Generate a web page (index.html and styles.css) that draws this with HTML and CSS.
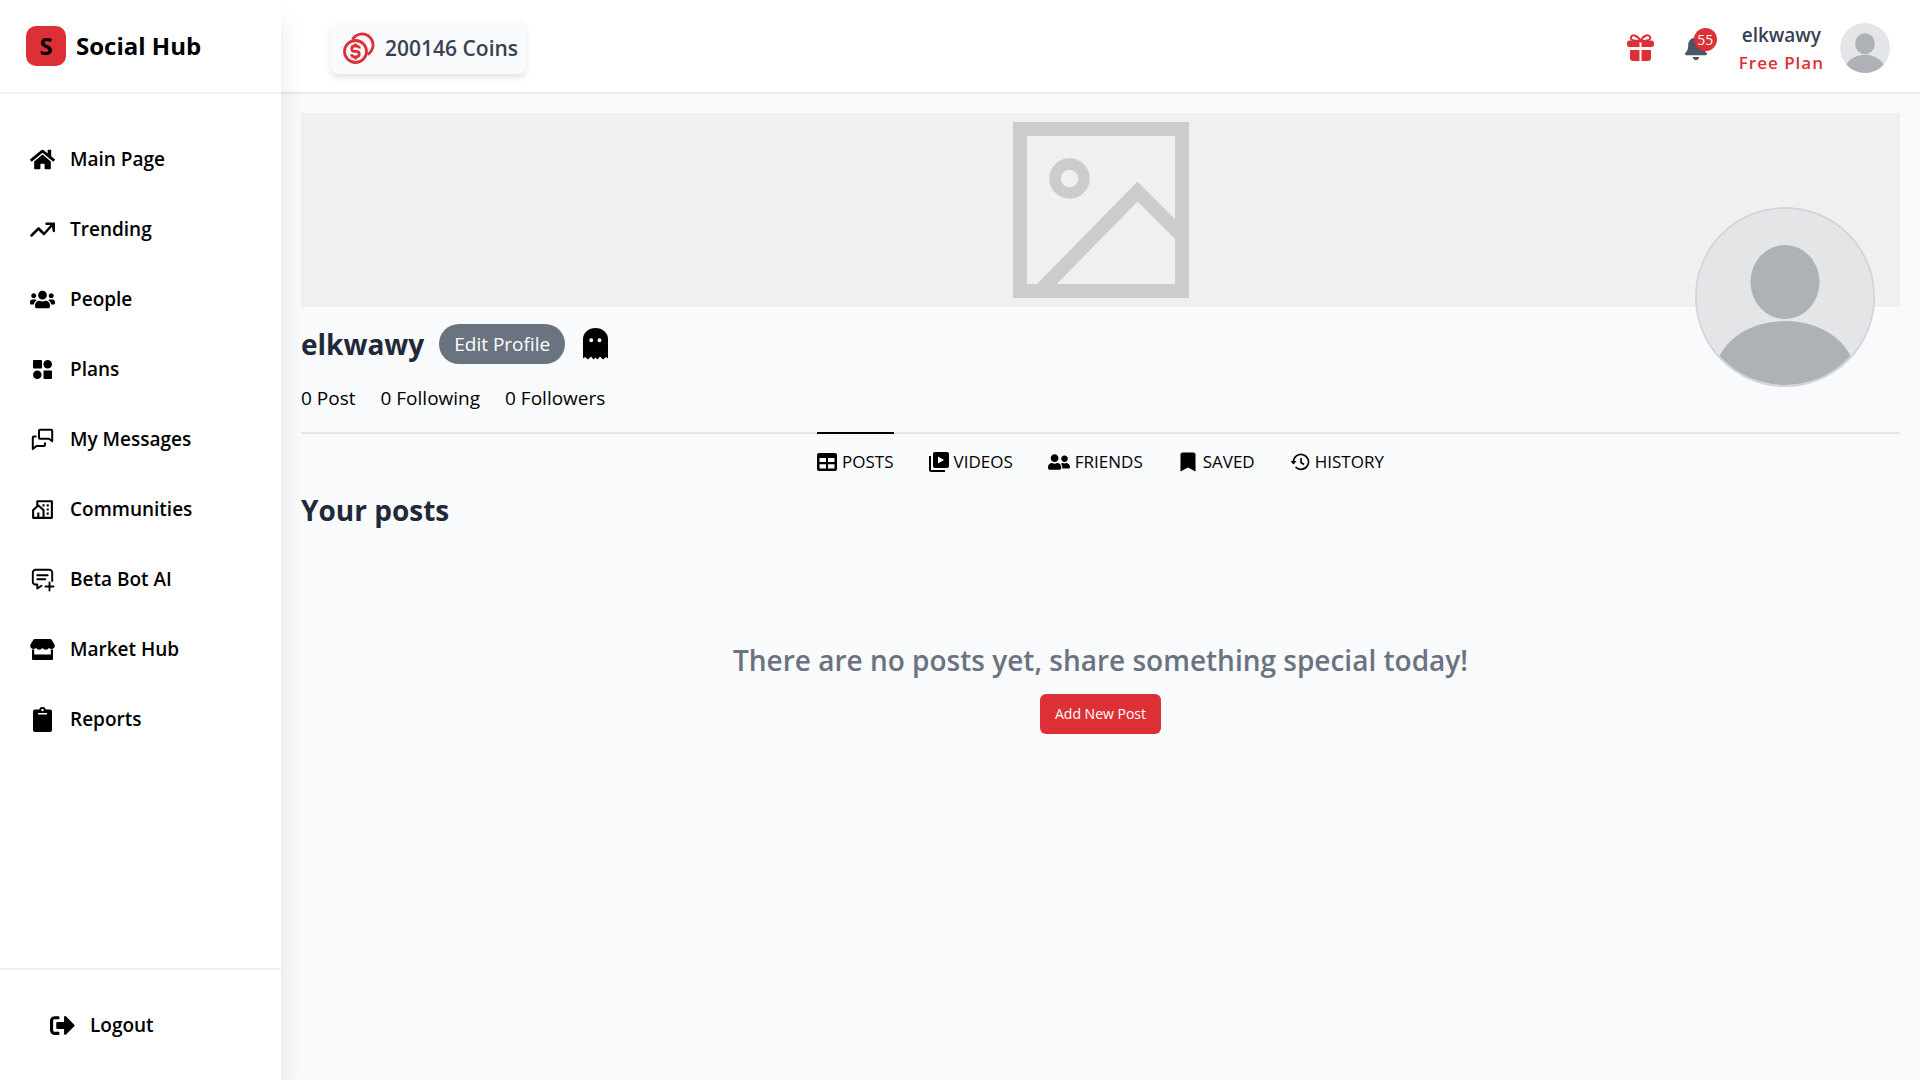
FILE: index.html
```html
<!DOCTYPE html>
<html lang="en">
<head>
<meta charset="utf-8">
<meta name="viewport" content="width=device-width, initial-scale=1">
<title>Social Hub</title>
<link rel="stylesheet" href="styles.css">
</head>
<body>
<div class="app">
  <aside class="sidebar">
    <a class="brand" href="#"><span class="brand-mark">S</span><span>Social Hub</span></a>
    <nav class="nav">
      <a href="#"><svg class="icon" viewBox="0 0 576 512"><path d="M280.37 148.26L96 300.11V464a16 16 0 0 0 16 16l112.06-.29a16 16 0 0 0 15.92-16V368a16 16 0 0 1 16-16h64a16 16 0 0 1 16 16v95.64a16 16 0 0 0 16 16.05L464 480a16 16 0 0 0 16-16V300L295.67 148.26a12.19 12.19 0 0 0-15.3 0zM571.6 251.47L488 182.56V44.05a12 12 0 0 0-12-12h-56a12 12 0 0 0-12 12v72.61L318.47 43a48 48 0 0 0-61 0L4.34 251.47a12 12 0 0 0-1.6 16.9l25.5 31A12 12 0 0 0 45.15 301l235.22-193.74a12.19 12.19 0 0 1 15.3 0L530.9 301a12 12 0 0 0 16.9-1.6l25.5-31a12 12 0 0 0-1.7-16.93z"/></svg><span>Main Page</span></a>
      <a href="#"><svg class="icon" viewBox="0 0 25 25"><path d="M1.5 18.5 8.5 11.500 14 17 22.500 7.500" fill="none" stroke="currentColor" stroke-width="2.500" stroke-linecap="round" stroke-linejoin="round"/><path d="M16.500 5.500H24a1 1 0 0 1 1 1V14a1.200 1.200 0 0 1-2.300.5L22 9.500 20 8l-3.500-.1a1.200 1.200 0 0 1 0-2.400z"/></svg><span>Trending</span></a>
      <a href="#"><svg class="icon" viewBox="0 0 640 512"><path d="M96 224c35.3 0 64-28.7 64-64s-28.7-64-64-64-64 28.7-64 64 28.7 64 64 64zm448 0c35.3 0 64-28.7 64-64s-28.7-64-64-64-64 28.7-64 64 28.7 64 64 64zm32 32h-64c-17.6 0-33.5 7.1-45.1 18.6 40.3 22.1 68.9 62 75.1 109.400h66c17.7 0 32-14.3 32-32v-32c0-35.3-28.7-64-64-64zm-256 0c61.9 0 112-50.1 112-112S381.900 32 320 32 208 82.1 208 144s50.1 112 112 112zm76.8 32h-8.300c-20.8 10-43.900 16-68.500 16s-47.600-6-68.500-16h-8.300C179.600 288 128 339.600 128 403.200V432c0 26.500 21.500 48 48 48h288c26.500 0 48-21.500 48-48v-28.800c0-63.600-51.600-115.200-115.200-115.200zm-223.700-13.400C161.500 263.100 145.600 256 128 256H64c-35.3 0-64 28.7-64 64v32c0 17.7 14.3 32 32 32h65.900c6.300-47.400 34.900-87.300 75.200-109.400z"/></svg><span>People</span></a>
      <a href="#"><svg class="icon" viewBox="0 0 25 25"><rect x="3" y="3" width="9" height="8.500" rx="1"/><circle cx="17.700" cy="7.200" r="4.300"/><circle cx="7.300" cy="17.700" r="4.300"/><rect x="13.500" y="13.500" width="8.500" height="8.500" rx="1"/></svg><span>Plans</span></a>
      <a href="#"><svg class="icon" viewBox="0 0 25 25"><path d="M10 2.800H21.200a1 1 0 0 1 1 1V14.200L19 11.800H10a1 1 0 0 1-1-1v-7a1 1 0 0 1 1-1zM6.500 9.500H3.800a1 1 0 0 0-1 1V22L6.500 19H14a1 1 0 0 0 1-1V15.500" fill="none" stroke="currentColor" stroke-width="2" stroke-linejoin="round"/></svg><span>My Messages</span></a>
      <a href="#"><svg class="icon" viewBox="0 0 24 24"><path d="M21 21H3a1 1 0 0 1-1-1v-7.513a1 1 0 0 1 .343-.754L6 8.544V4a1 1 0 0 1 1-1h14a1 1 0 0 1 1 1v16a1 1 0 0 1-1 1zM9 19h3v-6.058L8 9.454l-4 3.488V19h3v-4h2v4zm5 0h6V5H8v2.127c.234 0 .469.082.657.247l5 4.359a1 1 0 0 1 .343.754V19zm2-8h2v2h-2v-2zm0 4h2v2h-2v-2zm0-8h2v2h-2V7zm-4 0h2v2h-2V7z"/></svg><span>Communities</span></a>
      <a href="#"><svg class="icon" viewBox="0 0 25 25"><path d="M22.200 14V5.500a2.700 2.700 0 0 0-2.700-2.700h-14a2.700 2.700 0 0 0-2.700 2.700v9.300a2.700 2.700 0 0 0 2.700 2.700H7.300V21.500L11.500 18.800M7.300 8.300h10.400M7.300 12.300h8M19.500 15.500v8M15.500 19.500h8" fill="none" stroke="currentColor" stroke-width="1.900" stroke-linecap="round" stroke-linejoin="round"/></svg><span>Beta Bot AI</span></a>
      <a href="#"><svg class="icon" viewBox="0 0 25 25"><path d="M5 2H20a2 2 0 0 1 1.800 1L24.500 7.500a3.200 3.200 0 0 1-2.700 4.500A4 4 0 0 1 19 11a4 4 0 0 1-6.500 0A4 4 0 0 1 6 11 4 4 0 0 1 3.200 12 3.200 3.200 0 0 1 .5 7.500L3.200 3A2 2 0 0 1 5 2z"/><path d="M2 12.500H4.200V17.500H20.800V12.500H23V22a1 1 0 0 1-1 1H3a1 1 0 0 1-1-1z"/></svg><span>Market Hub</span></a>
      <a href="#"><svg class="icon" viewBox="0 0 25 25"><path fill-rule="evenodd" d="M5 2.500H9.200a3.400 3.400 0 0 1 6.600 0H20a2 2 0 0 1 2 2V23a2 2 0 0 1-2 2H5a2 2 0 0 1-2-2V4.500a2 2 0 0 1 2-2zM12.500 1.800a1.200 1.200 0 1 0 0 2.400 1.200 1.200 0 0 0 0-2.400zM8 6v1.500h9V6z"/></svg><span>Reports</span></a>
    </nav>
    <div class="sidebar-foot">
      <button class="logout" type="button"><svg class="icon" viewBox="0 0 512 512"><path d="M497 273L329 441c-15 15-41 4.500-41-17v-96H152c-13.300 0-24-10.700-24-24v-96c0-13.300 10.700-24 24-24h136V88c0-21.400 25.900-32 41-17l168 168c9.300 9.400 9.300 24.600 0 34zM192 436v-40c0-6.600-5.400-12-12-12H96c-17.700 0-32-14.300-32-32V160c0-17.700 14.300-32 32-32h84c6.600 0 12-5.400 12-12V76c0-6.600-5.400-12-12-12H96c-53 0-96 43-96 96v192c0 53 43 96 96 96h84c6.600 0 12-5.400 12-12z"/></svg><span>Logout</span></button>
    </div>
  </aside>

  <div class="content">
    <header class="topbar">
      <div class="coins">
        <svg viewBox="0 0 32 32"><g fill="none" stroke="currentColor" stroke-width="2.800"><circle cx="12.500" cy="19.500" r="11"/><path d="M9.500 7.500A11 11 0 1 1 24.500 22.500"/><path d="M16.500 16.500a3 2.500 0 0 0-3-2.500h-2a2.700 2.700 0 0 0 0 5.400h2a2.700 2.700 0 0 1 0 5.400h-2a3 2.500 0 0 1-3-2.500M12.500 11.500V14M12.500 25v2.500"/></g></svg>
        <span>200146 Coins</span>
      </div>
      <div class="account">
        <button class="gift" type="button" aria-label="Gifts"><svg viewBox="0 0 27 27"><path fill="none" stroke="currentColor" stroke-width="2" d="M13.500 7C10 .500 5 0 4 3S6 7 13.500 7C21 7 24 6 23 3S17 .500 13.500 7z"/><path d="M2.500 6.500H12.500V13H2.500A2.500 2.500 0 0 1 0 10.500V9a2.500 2.500 0 0 1 2.500-2.500zM14.500 6.500H24.500A2.500 2.500 0 0 1 27 9v1.500A2.500 2.500 0 0 1 24.500 13h-10zM3 16h9.500V27H6a3 3 0 0 1-3-3zM14.500 16H24v8a3 3 0 0 1-3 3h-6.500z"/></svg></button>
        <button class="bell" type="button" aria-label="Notifications"><svg viewBox="0 0 448 512"><path d="M224 512c35.320 0 63.970-28.650 63.970-64H160.030c0 35.350 28.650 64 63.970 64zm215.390-149.710c-19.320-20.760-55.470-51.990-55.470-154.290 0-77.700-54.480-139.900-127.940-155.160V32c0-17.670-14.320-32-31.980-32s-31.980 14.330-31.980 32v20.840C118.560 68.100 64.080 130.300 64.080 208c0 102.300-36.150 133.530-55.470 154.290-6 6.450-8.660 14.160-8.610 21.710.11 16.400 12.980 32 32.100 32h383.800c19.120 0 32-15.600 32.100-32 .05-7.550-2.610-15.270-8.610-21.710z"/></svg><span class="badge">55</span></button>
        <div class="who"><span class="who-name">elkwawy</span><span class="who-plan">Free Plan</span></div>
        <svg class="avatar-small" viewBox="0 0 176 176" role="img" aria-label="Profile photo"><rect width="176" height="176" fill="#e4e5e7"/><ellipse cx="88" cy="73" rx="34.500" ry="37"/><ellipse cx="88" cy="166" rx="70" ry="54"/></svg>
      </div>
    </header>

    <main class="page">
      <section class="profile">
        <div class="cover"><svg viewBox="0 0 176 176" role="img" aria-label="Cover placeholder"><g fill="none" stroke="#cccccc"><rect x="7" y="7" width="162" height="162" stroke-width="14"/><circle cx="56.500" cy="56.500" r="14.500" stroke-width="11.500"/><path d="M28 168 124.500 69.500 169 114" stroke-width="14"/></g></svg></div>
        <svg class="avatar" viewBox="0 0 176 176" role="img" aria-label="Profile photo"><rect width="176" height="176" fill="#e4e5e7"/><ellipse cx="88" cy="73" rx="34.500" ry="37"/><ellipse cx="88" cy="166" rx="70" ry="54"/></svg>
        <div class="identity">
          <h1>elkwawy</h1>
          <button class="edit" type="button">Edit Profile</button>
          <svg class="ghost" viewBox="0 0 25 32"><path fill-rule="evenodd" d="M0 11A12.500 11 0 0 1 25 11V30.500L23 29 20 31.500 17 28.500 14.500 31.500 12.500 29.500 10.500 31.500 8 28.500 5 31.500 2 29 0 30.500zM8.200 10.200a2 2 0 1 0 0 4 2 2 0 0 0 0-4zM16.500 10.200a2 2 0 1 0 0 4 2 2 0 0 0 0-4z"/></svg>
        </div>
        <div class="stats"><span>0 Post</span><span>0 Following</span><span>0 Followers</span></div>
      </section>
      <nav class="tabs">
        <a class="active" href="#"><svg viewBox="0 0 20 20"><path fill-rule="evenodd" d="M2 1H18a2 2 0 0 1 2 2V17a2 2 0 0 1-2 2H2a2 2 0 0 1-2-2V3a2 2 0 0 1 2-2zM2.500 6V10H9V6zM11 6V10H17.500V6zM2.500 12.200V16.500H9V12.200zM11 12.200V16.500H17.500V12.200z"/></svg>POSTS</a>
        <a href="#"><svg viewBox="2 2 20 20"><path d="M4 6H2v14c0 1.100.9 2 2 2h14v-2H4V6zm16-4H8c-1.100 0-2 .9-2 2v12c0 1.100.9 2 2 2h12c1.100 0 2-.9 2-2V4c0-1.100-.9-2-2-2zm-9 11.500v-7l6 3.500-6 3.500z"/></svg>VIDEOS</a>
        <a href="#"><svg class="wide" viewBox="0 0 640 512"><path d="M192 256c61.900 0 112-50.100 112-112S253.900 32 192 32 80 82.100 80 144s50.100 112 112 112zm76.800 32h-8.300c-20.800 10-43.900 16-68.500 16s-47.600-6-68.500-16h-8.300C51.600 288 0 339.600 0 403.200V432c0 26.500 21.500 48 48 48h288c26.500 0 48-21.500 48-48v-28.800c0-63.600-51.600-115.200-115.200-115.200zM480 256c53 0 96-43 96-96s-43-96-96-96-96 43-96 96 43 96 96 96zm48 32h-3.800c-13.900 4.800-28.600 8-44.200 8s-30.300-3.200-44.200-8H432c-20.400 0-39.200 5.900-55.700 15.400 24.400 26.300 39.700 61.200 39.700 99.800v38.400c0 2.200-.5 4.300-.6 6.400H592c26.500 0 48-21.500 48-48 0-61.900-50.100-112-112-112z"/></svg>FRIENDS</a>
        <a href="#"><svg viewBox="0 0 20 20"><path d="M4.500.5h11a2 2 0 0 1 2 2V19.500L10 15.500 2.500 19.500v-17a2 2 0 0 1 2-2z"/></svg>SAVED</a>
        <a href="#"><svg viewBox="0 0 20 20"><path d="M3.500 11.500V10A7.500 7.500 0 1 1 5.500 15M11 6v4.500l3 2" fill="none" stroke="currentColor" stroke-width="1.600"/><path d="M.5 9H6.500L3.500 12.500z"/></svg>HISTORY</a>
      </nav>
      <section class="posts">
        <h2>Your posts</h2>
        <div class="empty">
          <p>There are no posts yet, share something special today!</p>
          <button class="add" type="button">Add New Post</button>
        </div>
      </section>
    </main>
  </div>
</div>
</body>
</html>
```
FILE: styles.css
```css
* {
  box-sizing: border-box;
}

body {
  margin: 0;
  background: #f9fafc;
  color: #000;
  font-family: "Open Sans", "Noto Sans", sans-serif;
  font-size: 19px;
  line-height: 28px;
}

a {
  color: inherit;
  text-decoration: none;
}

button {
  border: 0;
  padding: 0;
  background: none;
  color: inherit;
  font: inherit;
  cursor: pointer;
}

svg {
  display: block;
  flex: none;
  fill: currentColor;
}

h1,
h2,
p {
  margin: 0;
}

.app {
  display: grid;
  grid-template-columns: 281px 1fr;
  min-height: 100vh;
}

/* Sidebar */
.sidebar {
  position: relative;
  z-index: 1;
  display: flex;
  flex-direction: column;
  background: #fff;
  box-shadow: 0 20px 25px rgba(0, 0, 0, 0.1);
}

.brand {
  display: flex;
  align-items: center;
  gap: 10px;
  height: 94px;
  padding: 0 26px;
  border-bottom: 2px solid #f0f0f6;
  font-size: 24px;
  font-weight: 700;
}

.brand-mark {
  display: grid;
  place-items: center;
  width: 40px;
  height: 40px;
  border-radius: 10px;
  background: #dd3036;
}

.nav {
  display: flex;
  flex: 1;
  flex-direction: column;
  gap: 20px;
  padding: 40px 20px;
}

.nav a,
.logout {
  display: flex;
  align-items: center;
  gap: 15px;
  height: 50px;
  padding: 0 10px;
  font-weight: 600;
}

.icon {
  width: 25px;
  height: 25px;
}

.sidebar-foot {
  padding: 30px 40px;
  border-top: 2px solid #f0f0f6;
}

/* Top bar */
.topbar {
  display: flex;
  align-items: center;
  justify-content: space-between;
  height: 93px;
  padding: 3px 30px 0 50px;
  border-bottom: 1px solid #e5e7eb;
  background: #fff;
  box-shadow: 0 1px 2px rgba(0, 0, 0, 0.06);
}

.coins {
  display: flex;
  align-items: center;
  gap: 10px;
  height: 53px;
  padding: 0 8px 0 12px;
  border-radius: 8px;
  background: #f9fafc;
  box-shadow: 0 4px 6px rgba(0, 0, 0, 0.1);
  color: #374151;
  font-size: 21px;
  font-weight: 600;
}

.coins svg {
  width: 32px;
  height: 32px;
  color: #dd3036;
}

.account {
  display: flex;
  align-items: center;
}

.gift {
  margin-right: 31px;
  color: #dd3036;
}

.gift svg {
  width: 27px;
  height: 27px;
}

.bell {
  position: relative;
  margin-right: 32px;
  color: #4b5563;
}

.bell svg {
  width: 22px;
  height: 25px;
}

.badge {
  position: absolute;
  top: -7px;
  left: 9px;
  width: 23px;
  height: 23px;
  border-radius: 50%;
  background: #dd3036;
  color: #fff;
  font-size: 14px;
  line-height: 23px;
}

.who {
  display: flex;
  flex-direction: column;
  align-items: center;
  margin-right: 16px;
  padding-top: 2px;
  color: #374151;
  font-weight: 600;
}

.who-plan {
  color: #dd3036;
  font-size: 17px;
  letter-spacing: 1px;
}

.avatar-small {
  width: 50px;
  height: 50px;
  border-radius: 50%;
  fill: #aeb2b7;
}

/* Profile */
.page {
  padding: 20px;
}

.profile {
  position: relative;
  border-bottom: 2px solid #e5e7eb;
}

.cover {
  display: grid;
  place-items: center;
  height: 194px;
  background: #f0f0f0;
}

.cover svg {
  width: 176px;
  height: 176px;
}

.avatar {
  position: absolute;
  top: 94px;
  right: 25px;
  width: 180px;
  height: 180px;
  border: 2px solid #d1d5db;
  border-radius: 50%;
  fill: #aeb2b7;
}

.identity {
  display: flex;
  align-items: center;
  gap: 15px;
  padding-top: 17px;
}

h1,
h2 {
  color: #1f2937;
  font-size: 28px;
  font-weight: 700;
  line-height: 40px;
}

.edit {
  height: 40px;
  padding: 0 15px;
  border-radius: 20px;
  background: #6b7280;
  color: #fff;
}

.ghost {
  width: 25px;
  height: 32px;
  margin-left: 3px;
}

.stats {
  display: flex;
  gap: 25px;
  padding: 20px 0;
}

.tabs {
  position: relative;
  display: flex;
  justify-content: center;
  gap: 35px;
  margin-top: -2px;
  font-size: 17px;
}

.tabs a {
  display: flex;
  align-items: center;
  gap: 5px;
  padding-top: 14px;
  border-top: 2px solid transparent;
}

.tabs .active {
  border-color: #000;
}

.tabs svg {
  width: 20px;
  height: 20px;
}

.tabs .wide {
  width: 22px;
}

.posts {
  padding-top: 14px;
}

.empty {
  display: flex;
  flex-direction: column;
  align-items: center;
  gap: 14px;
  padding-top: 110px;
}

.empty p {
  color: #6b7280;
  font-size: 28px;
  font-weight: 600;
  line-height: 40px;
}

.add {
  height: 40px;
  padding: 0 15px;
  border-radius: 6px;
  background: #dd3036;
  color: #fff;
  font-size: 14px;
}
```
